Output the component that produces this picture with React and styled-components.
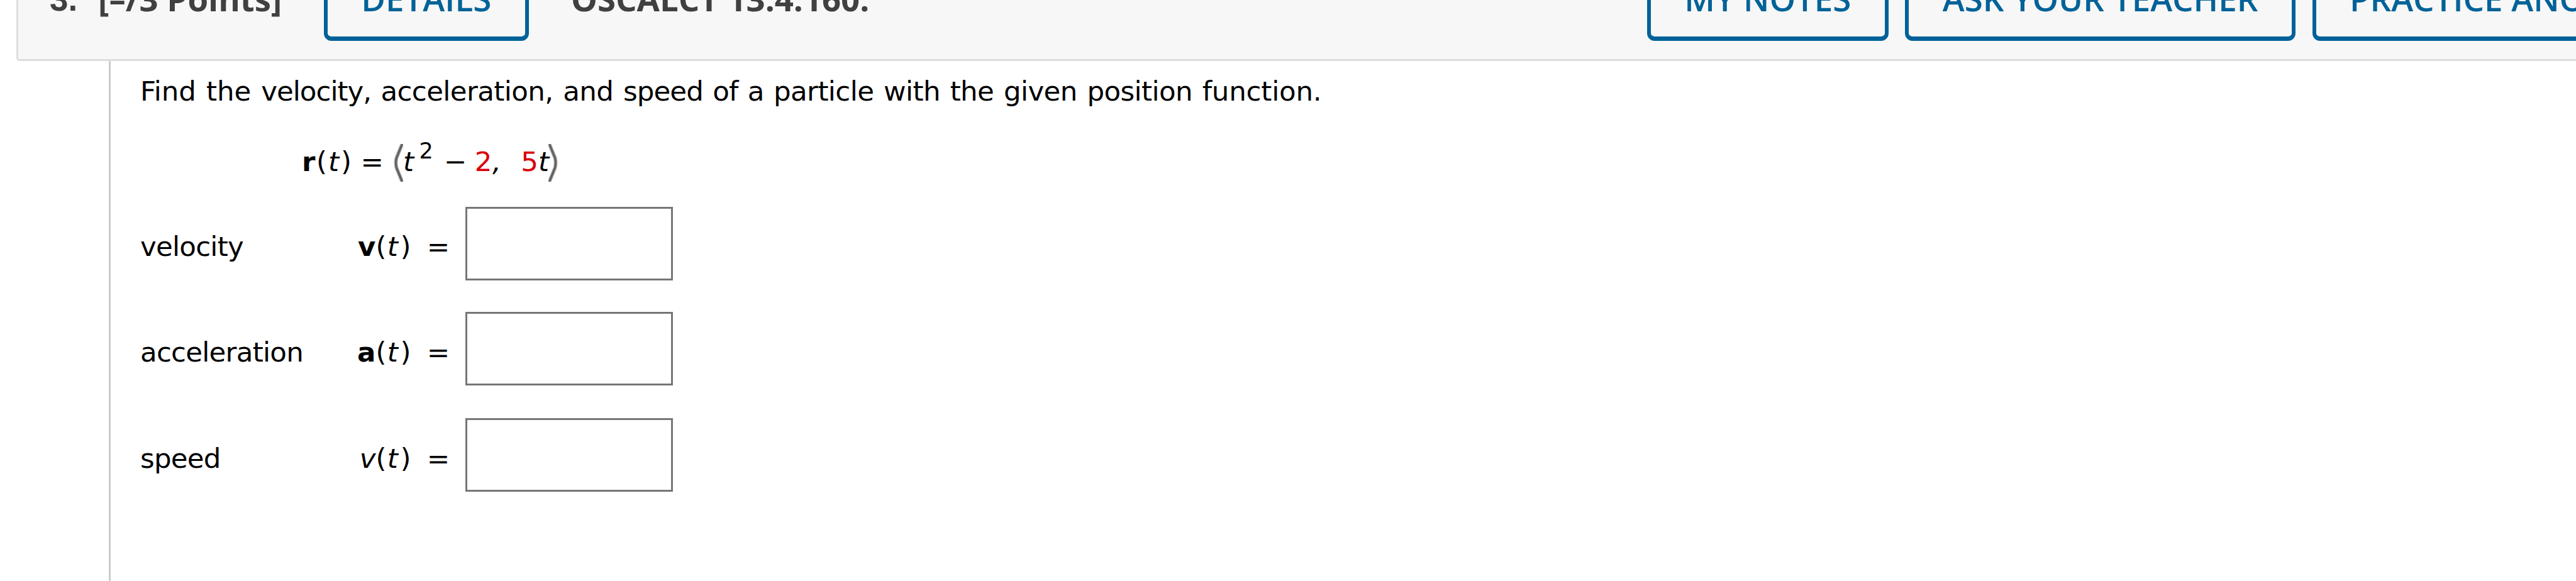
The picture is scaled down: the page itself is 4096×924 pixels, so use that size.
import React from "react";
import styled, { createGlobalStyle } from "styled-components";

const GlobalStyle = createGlobalStyle`
  html, body { margin: 0; padding: 0; background: #fff; overflow: hidden; }
  * { box-sizing: border-box; }
`;

const Page = styled.div`
  width: 100vw;
  height: 100vh;
  overflow: hidden;
  display: flex;
  flex-direction: column;
  background: #fff;
`;

const Header = styled.header`
  flex: none;
  display: flex;
  align-items: center;
  height: 199px;
  margin: -102px 0 0 26px;
  padding-left: 50px;
  border: 3px solid #ddd;
  border-right: 0;
  border-radius: 5px 0 0 5px;
  background: #f7f7f7;
  font: 700 52.7px/72px "Open Sans", sans-serif;
  color: #404040;
  white-space: nowrap;
`;

const QuestionNumber = styled.span`
  flex: none;
  width: 77px;
  margin-top: 2px;
  font-family: "Liberation Sans", sans-serif;
  font-size: 53px;
`;

const Points = styled.span`
  flex: none;
  width: 359px;
`;

const Source = styled.span`
  flex: none;
  width: 1711.5px;
  padding-left: 67.5px;
  margin-right: 67px;
`;

const Actions = styled.div`
  flex: none;
  display: flex;
  gap: 26.8px;
`;

const ActionButton = styled.button`
  flex: none;
  margin: 0;
  padding: 24px 53.3px;
  border: solid #006298;
  border-width: 7px 6px;
  border-radius: 12px;
  background: transparent;
  color: #006298;
  font: 600 52.85px/72px "Open Sans", sans-serif;
  white-space: nowrap;
`;

const Question = styled.main`
  flex: 1;
  margin-left: 173px;
  padding: 22px 0 0 47px;
  border-left: 3px solid #ccc;
  font: 43.5px/52px "DejaVu Sans", Verdana, sans-serif;
  color: #000;
  white-space: nowrap;
`;

const Prompt = styled.p`
  margin: 0;
  letter-spacing: -0.6px;
  word-spacing: 2.5px;
`;

const Words = styled.span`
  letter-spacing: ${(p) => p.$tracking}px;
`;

const Formula = styled.div`
  display: flex;
  align-items: flex-start;
  height: 60px;
  margin: 58px 0 40px 257px;
`;

const Token = styled.span`
  flex: none;
  margin: 2px 0 0 ${(p) => p.$gap || 0}px;
  color: ${(p) => (p.$red ? "#d90009" : "inherit")};
`;

const BoldToken = styled(Token)`
  font-weight: 700;
`;

const Variable = styled(Token)`
  font-style: italic;
`;

const Exponent = styled.sup`
  flex: none;
  margin: -7px 0 0 8.5px;
  font-size: 35px;
  line-height: 36px;
`;

const BracketSvg = styled.svg`
  flex: none;
  display: block;
  width: 16px;
  height: 60px;
  margin-left: ${(p) => p.$gap || 0}px;
  transform: ${(p) => (p.$flip ? "scaleX(-1)" : "none")};
`;

const AnswerRow = styled.div`
  display: flex;
  align-items: center;
  height: 117px;
  margin-bottom: ${(p) => p.$after}px;
`;

const Label = styled.span`
  flex: none;
  width: 344px;
  padding-top: ${(p) => p.$drop}px;
  letter-spacing: -0.75px;
`;

const Expression = styled.span`
  flex: none;
  display: flex;
  width: 173px;
  padding-top: ${(p) => p.$drop}px;
`;

const FunctionName = styled.span`
  flex: none;
  width: 30.4px;
  text-align: right;
  font-weight: ${(p) => (p.$vector ? 700 : 400)};
  font-style: ${(p) => (p.$vector ? "normal" : "italic")};
`;

const Piece = styled.span`
  flex: none;
  margin-left: ${(p) => p.$gap || 0}px;
  font-style: ${(p) => (p.$italic ? "italic" : "normal")};
`;

const AnswerInput = styled.input`
  flex: none;
  width: 330px;
  height: 117px;
  margin: 0;
  padding: 0 12px;
  border: 3px solid #767676;
  border-radius: 0;
  background: #fff;
  font: inherit;
  outline: none;
`;

function Bracket({ gap, flip }) {
  const d = "M14.5 0 L5.5 22 Q3.5 30 5.5 38 L14.5 60";
  return (
    <BracketSvg viewBox="0 0 16 60" fill="none" $gap={gap} $flip={flip}>
      <path d={d} stroke="#b8b8b8" strokeWidth="6" />
      <path d={d} stroke="#626262" strokeWidth="3.5" />
    </BracketSvg>
  );
}

const answers = [
  { label: "velocity", name: "v", vector: true, drop: 8, after: 50 },
  { label: "acceleration", name: "a", vector: true, drop: 11, after: 52 },
  { label: "speed", name: "v", vector: false, drop: 10, after: 0 },
];

export default function App() {
  return (
    <Page>
      <GlobalStyle />
      <Header>
        <QuestionNumber>3.</QuestionNumber>
        <Points>[–/3 Points]</Points>
        <ActionButton>DETAILS</ActionButton>
        <Source>OSCALCT 13.4.160.</Source>
        <Actions>
          <ActionButton>MY NOTES</ActionButton>
          <ActionButton>ASK YOUR TEACHER</ActionButton>
          <ActionButton>PRACTICE ANOTHER</ActionButton>
        </Actions>
      </Header>
      <Question>
        <Prompt>
          <Words $tracking={-0.1}>Find the </Words>
          <Words $tracking={-1}>velocity, </Words>
          acceleration, and <Words $tracking={-0.9}>speed of a </Words>
          particle with the given position <Words $tracking={-0.2}>function.</Words>
        </Prompt>
        <Formula>
          <BoldToken>r</BoldToken>
          <Token $gap={1.6}>(</Token>
          <Variable $gap={2}>t</Variable>
          <Token $gap={3}>)</Token>
          <Token $gap={14.4}>=</Token>
          <Bracket gap={15} />
          <Variable>t</Variable>
          <Exponent>2</Exponent>
          <Token $gap={17}>−</Token>
          <Token $gap={12.5} $red>2</Token>
          <Variable $gap={0.5}>,</Variable>
          <Token $gap={31.5} $red>5</Token>
          <Variable>t</Variable>
          <Bracket flip gap={-0.8} />
        </Formula>
        {answers.map((a) => (
          <AnswerRow key={a.label} $after={a.after}>
            <Label $drop={a.drop}>{a.label}</Label>
            <Expression $drop={a.drop}>
              <FunctionName $vector={a.vector}>{a.name}</FunctionName>
              <Piece>(</Piece>
              <Piece $italic $gap={1.4}>t</Piece>
              <Piece $gap={3.6}>)</Piece>
              <Piece $gap={25.4}>=</Piece>
            </Expression>
            <AnswerInput aria-label={a.label} />
          </AnswerRow>
        ))}
      </Question>
    </Page>
  );
}
